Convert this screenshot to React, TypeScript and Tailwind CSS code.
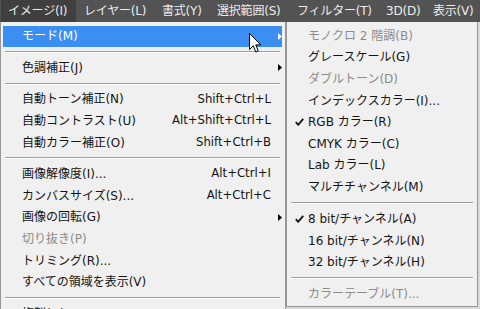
import React from "react";

type Item =
  | { sep: true }
  | { sep?: false; label: string; shortcut?: string; disabled?: boolean; sub?: boolean; active?: boolean; checked?: boolean };

const font = { fontFamily: '"DejaVu Sans", "Noto Sans CJK JP", sans-serif' };

const mainItems: Item[] = [
  { label: "モード(M)", sub: true, active: true },
  { sep: true },
  { label: "色調補正(J)", sub: true },
  { sep: true },
  { label: "自動トーン補正(N)", shortcut: "Shift+Ctrl+L" },
  { label: "自動コントラスト(U)", shortcut: "Alt+Shift+Ctrl+L" },
  { label: "自動カラー補正(O)", shortcut: "Shift+Ctrl+B" },
  { sep: true },
  { label: "画像解像度(I)...", shortcut: "Alt+Ctrl+I" },
  { label: "カンバスサイズ(S)...", shortcut: "Alt+Ctrl+C" },
  { label: "画像の回転(G)", sub: true },
  { label: "切り抜き(P)", disabled: true },
  { label: "トリミング(R)..." },
  { label: "すべての領域を表示(V)" },
  { sep: true },
  { label: "複製(D)..." },
];

const subItems: Item[] = [
  { label: "モノクロ 2 階調(B)", disabled: true },
  { label: "グレースケール(G)" },
  { label: "ダブルトーン(D)", disabled: true },
  { label: "インデックスカラー(I)..." },
  { label: "RGB カラー(R)", checked: true },
  { label: "CMYK カラー(C)" },
  { label: "Lab カラー(L)" },
  { label: "マルチチャンネル(M)" },
  { sep: true },
  { label: "8 bit/チャンネル(A)", checked: true },
  { label: "16 bit/チャンネル(N)" },
  { label: "32 bit/チャンネル(H)" },
  { sep: true },
  { label: "カラーテーブル(T)...", disabled: true },
];

function Arrow({ white }: { white?: boolean }) {
  return (
    <svg width="4" height="7" viewBox="0 0 4 7" className="shrink-0">
      <path d="M0 0 L4 3.5 L0 7 Z" fill={white ? "#ffffff" : "#000000"} />
    </svg>
  );
}

function Check() {
  return (
    <svg width="9" height="8" viewBox="0 0 9 8">
      <path d="M0.8 4.2 L3.2 6.8 L8.2 0.8" fill="none" stroke="#111" strokeWidth="1.8" />
    </svg>
  );
}

function Sep({ h }: { h: string }) {
  return (
    <div className={`${h} flex flex-col justify-center px-[2px]`}>
      <div className="h-px bg-[#a0a0a0]" />
      <div className="h-px bg-white" />
    </div>
  );
}

function Row({ it }: { it: Exclude<Item, { sep: true }> }) {
  const color = it.active ? "text-white" : it.disabled ? "text-[#8c8c8c]" : "text-[#141414]";
  return (
    <div className={`h-[21.6px] flex items-center ${it.active ? "bg-[#3b8ef2]" : ""} ${color}`}>
      <div className="w-[19px] shrink-0 flex justify-center pl-[2px]">{it.checked ? <Check /> : null}</div>
      <div className="flex-1 text-[12px] leading-none whitespace-nowrap">{it.label}</div>
      {it.shortcut ? <div className="text-[11.7px] leading-none whitespace-nowrap">{it.shortcut}</div> : null}
      <div className="w-[11px] shrink-0 flex justify-end">{it.sub ? <Arrow white={it.active} /> : null}</div>
    </div>
  );
}

const bar: { label: string; w: string }[] = [
  { label: "レイヤー(L)", w: "w-[78px]" },
  { label: "書式(Y)", w: "w-[55px]" },
  { label: "選択範囲(S)", w: "w-[80px]" },
  { label: "フィルター(T)", w: "w-[89px]" },
  { label: "3D(D)", w: "w-[47px]" },
  { label: "表示(V)", w: "w-[55px]" },
];

export default function App() {
  return (
    <div className="w-[480px] h-[309px] overflow-hidden bg-[#dadada] flex flex-col" style={font}>
      <div className="h-[22px] bg-[#535353] flex items-center text-[#ececec] text-[12px] shrink-0 whitespace-nowrap tracking-[-0.2px]">
        <div className="h-full w-[75px] shrink-0 bg-[#3f3f3f] flex items-center pl-[7px] ml-[1px] whitespace-nowrap">イメージ(I)</div>
        {bar.map((b) => (
          <div key={b.label} className={`${b.w} shrink-0 pl-[8px] whitespace-nowrap`}>{b.label}</div>
        ))}
      </div>
      <div className="flex items-start relative">
        <div className="w-[286px] shrink-0 bg-[#f0f0f0] border-l border-r border-[#979797] pt-[3.5px] px-[2px] pr-[3px]">
          {mainItems.map((it, i) =>
            it.sep ? <Sep key={i} h="h-[10px]" /> : <Row key={i} it={it} />
          )}
        </div>
        <div className="w-[192px] shrink-0 bg-[#f0f0f0] border border-t-0 border-[#979797] pt-[3px] pb-[1px] px-[2px]">
          {subItems.map((it, i) =>
            it.sep ? <Sep key={i} h="h-[10.4px]" /> : <Row key={i} it={it} />
          )}
        </div>
        <svg className="absolute left-[249px] top-[11px]" width="13" height="21" viewBox="0 0 13 21">
          <path d="M0.5 0.5 L0.5 16.5 L4.3 12.8 L6.8 19 L9.2 18 L6.8 11.9 L11.8 11.9 Z" fill="#ffffff" stroke="#000000" strokeWidth="1" strokeLinejoin="round" />
        </svg>
      </div>
    </div>
  );
}
